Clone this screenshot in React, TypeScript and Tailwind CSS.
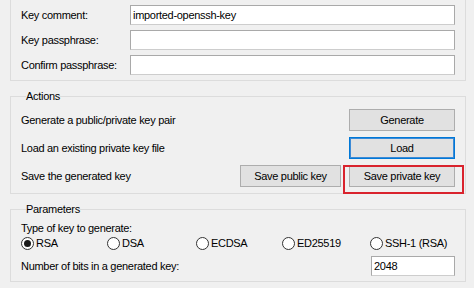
import React from "react";

const font = { fontFamily: '"Liberation Sans", Arial, sans-serif' };

function TextBox({ value = "", className = "" }: { value?: string; className?: string }) {
  return (
    <div
      className={
        "h-[20px] bg-white border border-[#a9a9a9] border-b-[#cdcdcd] flex items-center px-[2px] " + className
      }
    >
      <span className="leading-[14px]">{value}</span>
    </div>
  );
}

function Button({ label, width, primary = false }: { label: string; width: string; primary?: boolean }) {
  return (
    <div
      className={
        "h-[22px] flex items-center justify-center bg-[#e1e1e1] border " +
        (primary ? "border-[#0078d7] shadow-[inset_0_0_0_1px_#3c8ad6]" : "border-[#adadad]") +
        " " +
        width
      }
    >
      <span className="leading-[14px]">{label}</span>
    </div>
  );
}

function Radio({ label, checked = false }: { label: string; checked?: boolean }) {
  return (
    <div className="flex items-center gap-[2px] h-[16px]">
      <div className="w-[13px] h-[13px] rounded-full border border-[#333333] bg-white flex items-center justify-center">
        {checked && <div className="w-[7px] h-[7px] rounded-full bg-[#1a1a1a]" />}
      </div>
      <span className="leading-[14px]">{label}</span>
    </div>
  );
}

export default function App() {
  return (
    <div
      className="w-[474px] h-[288px] overflow-hidden bg-[#f0f0f0] text-[11px] tracking-[-0.3px] text-black"
      style={font}
    >
      {/* Key details group (top border off-screen) */}
      <div className="ml-[10px] w-[456px] border-l border-r border-b border-[#dcdcdc] pt-[5px] pb-[5px] pl-[10px] pr-[10px] flex flex-col gap-[5px]">
        {[
          ["Key comment:", "imported-openssh-key"],
          ["Key passphrase:", ""],
          ["Confirm passphrase:", ""],
        ].map(([l, v]) => (
          <div key={l} className="flex items-center">
            <div className="w-[109px] leading-[14px]">{l}</div>
            <TextBox value={v} className="flex-1" />
          </div>
        ))}
      </div>

      {/* Actions */}
      <fieldset className="relative ml-[10px] mt-[8px] w-[456px] border border-[#dcdcdc] pl-[10px] pr-[10px] pb-[6px]">
        <legend className="ml-[5px] leading-[14px] px-0">Actions</legend>
        <div className="pt-[6px] flex flex-col gap-[6px]">
          <div className="flex items-center justify-between">
            <span className="leading-[14px]">Generate a public/private key pair</span>
            <Button label="Generate" width="w-[106px]" />
          </div>
          <div className="flex items-center justify-between">
            <span className="leading-[14px]">Load an existing private key file</span>
            <Button label="Load" width="w-[106px]" primary />
          </div>
          <div className="flex items-center">
            <span className="leading-[14px] flex-1">Save the generated key</span>
            <Button label="Save public key" width="w-[101px]" />
            <div className="relative ml-[8px]">
              <Button label="Save private key" width="w-[106px]" />
              <div className="absolute left-[-6px] top-[0px] w-[121px] h-[29px] border-2 border-[#d9232d]" />
            </div>
          </div>
        </div>
      </fieldset>

      {/* Parameters */}
      <fieldset className="ml-[10px] mt-[8px] w-[456px] border border-[#dcdcdc] pl-[10px] pr-[10px] pb-[5px]">
        <legend className="ml-[5px] leading-[14px] px-0">Parameters</legend>
        <div className="pt-[5px]">
          <div className="leading-[14px]">Type of key to generate:</div>
          <div className="grid grid-cols-[86px_89px_86px_88px_auto]">
            <Radio label="RSA" checked />
            <Radio label="DSA" />
            <Radio label="ECDSA" />
            <Radio label="ED25519" />
            <Radio label="SSH-1 (RSA)" />
          </div>
          <div className="mt-[5px] flex items-center">
            <span className="leading-[14px] flex-1">Number of bits in a generated key:</span>
            <TextBox value="2048" className="w-[84px]" />
          </div>
        </div>
      </fieldset>
    </div>
  );
}
